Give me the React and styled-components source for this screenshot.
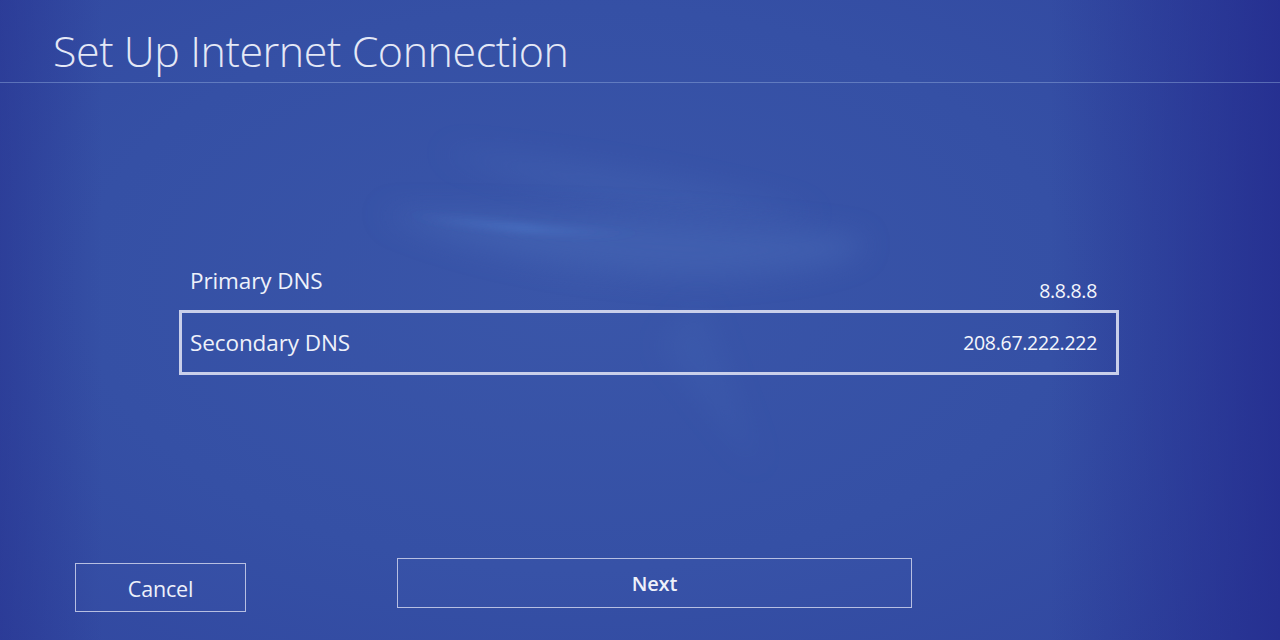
import React from 'react';
import styled, {createGlobalStyle} from 'styled-components';


const GlobalStyle = createGlobalStyle`
  html, body {
    margin: 0;
    padding: 0;
    overflow: hidden;
  }
  body {
    font-family: 'Open Sans', 'Noto Sans', sans-serif;
    color: #f2f4fb;
  }
`;


const Screen = styled.div`
  position: relative;
  width: 1280px;
  height: 640px;
  overflow: hidden;
  display: flex;
  flex-direction: column;
  background:
    linear-gradient(90deg, rgba(36, 44, 140, .45) 0%, rgba(36, 44, 140, 0) 8%, rgba(36, 44, 140, 0) 82%, rgba(34, 40, 140, .75) 100%),
    radial-gradient(ellipse 70% 80% at 45% 45%, #3a56a9 0%, #3550a5 55%, #3147a0 100%);
`;

// soft swoosh drawn behind everything
const Backdrop = styled.svg`
  position: absolute;
  inset: 0;
  pointer-events: none;
`;

const Header = styled.header`
  position: relative;
  height: 82px;
  padding-left: 53px;
  border-bottom: 1px solid rgba(150, 175, 225, .45);
  display: flex;
  align-items: flex-end;
`;

const Title = styled.h1`
  margin: 0 0 2px;
  font-weight: 300;
  font-size: 43px;
  letter-spacing: -.45px;
  color: #e4e8f6;
`;

const List = styled.div`
  position: relative;
  margin: 164px 0 0 179px;
  width: 940px;
  display: flex;
  flex-direction: column;
`;

const Row = styled.div`
  box-sizing: border-box;
  height: ${p => p.$focused ? 65 : 63}px;
  display: flex;
  justify-content: space-between;
  align-items: ${p => p.$focused ? 'center' : 'flex-end'};
  padding: ${p => p.$focused ? '0 19px 1px 8px' : '0 22px 6px 11px'};
  border: ${p => p.$focused ? '3px solid #c9cfea' : 'none'};
`;

const Label = styled.span`
  font-size: 22.5px;
  font-weight: 400;
  letter-spacing: -.1px;
  color: #eef1fa;
  margin-bottom: ${p => p.$raised ? '8px' : '0'};
`;

const Value = styled.span`
  font-size: 19.5px;
  letter-spacing: -.3px;
  color: #f4f6fc;
`;

const Footer = styled.footer`
  position: relative;
  margin-top: auto;
  margin-bottom: 28px;
  padding-left: 75px;
  display: flex;
  align-items: flex-start;
  gap: 151px;
`;

const Button = styled.button`
  width: ${p => p.$wide ? 515 : 171}px;
  height: ${p => p.$wide ? 50 : 49}px;
  margin-top: ${p => p.$wide ? 0 : 5}px;
  padding: 0;
  background: rgba(70, 100, 185, .12);
  border: 1.5px solid #b7bfe2;
  color: #eef1fa;
  font-family: 'Open Sans', 'Noto Sans', sans-serif;
  font-size: ${p => p.$wide ? 20 : 21.5}px;
  font-weight: ${p => p.$wide ? 600 : 500};
  letter-spacing: -.2px;
  padding-top: ${p => p.$wide ? 0 : 2}px;
`;


const Swoosh = () =>
  <Backdrop viewBox="0 0 1280 640" width="1280" height="640">
    <defs>
      <filter id="soft" x="-20%" y="-50%" width="140%" height="200%">
        <feGaussianBlur stdDeviation="14" />
      </filter>
      <filter id="softer" x="-20%" y="-50%" width="140%" height="200%">
        <feGaussianBlur stdDeviation="4" />
      </filter>
      <linearGradient id="streak" x1="0" x2="1" y1="0" y2="0">
        <stop offset="0" stopColor="#4f7fd0" stopOpacity="0" />
        <stop offset=".5" stopColor="#4f80d2" stopOpacity=".9" />
        <stop offset="1" stopColor="#4f80d2" stopOpacity="0" />
      </linearGradient>
    </defs>
    <path d="M440 150 C 560 160, 700 180, 820 215 C 700 215, 560 200, 440 150 Z"
      fill="#4a6ab8" opacity=".35" filter="url(#soft)" />
    <path d="M380 212 C 520 215, 700 215, 860 238 C 880 255, 820 272, 700 278 C 560 272, 450 245, 380 212 Z"
      fill="#4767b6" opacity=".55" filter="url(#soft)" />
    <path d="M400 213 C 480 222, 560 232, 650 233 C 560 236, 470 228, 400 213 Z"
      fill="url(#streak)" filter="url(#softer)" />
    <path d="M660 345 L 760 470 L 700 300 Z" fill="#4566b4" opacity=".25" filter="url(#soft)" />
  </Backdrop>;


const App = () =>
  <Screen>
    <GlobalStyle />
    <Swoosh />
    <Header>
      <Title>Set Up Internet Connection</Title>
    </Header>
    <List>
      <Row>
        <Label $raised>Primary DNS</Label>
        <Value>8.8.8.8</Value>
      </Row>
      <Row $focused>
        <Label>Secondary DNS</Label>
        <Value>208.67.222.222</Value>
      </Row>
    </List>
    <Footer>
      <Button>Cancel</Button>
      <Button $wide>Next</Button>
    </Footer>
  </Screen>;

export default App;
